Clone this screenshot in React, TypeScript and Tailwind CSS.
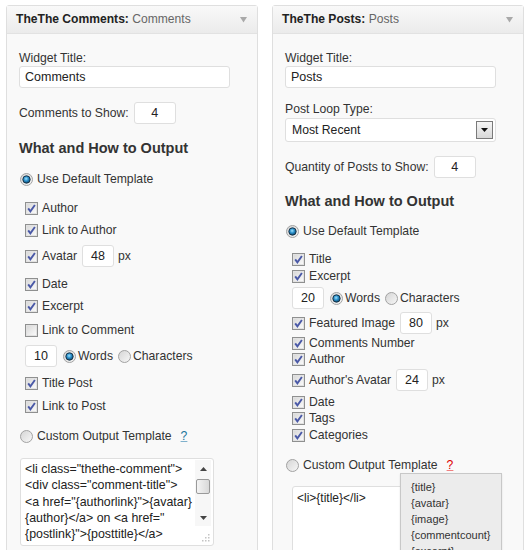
import React from "react";

const labelText = "text-[12.2px] leading-4 text-[#333]";

function Defs() {
  return (
    <svg width="0" height="0" className="absolute">
      <defs>
        <linearGradient id="cbg" x1="0" y1="0" x2="1" y2="1">
          <stop offset="0" stopColor="#d8d8d8" />
          <stop offset="1" stopColor="#fbfbfb" />
        </linearGradient>
        <linearGradient id="rbg" x1="0" y1="0" x2="1" y2="1">
          <stop offset="0" stopColor="#d4d4d4" />
          <stop offset="1" stopColor="#f8f8f8" />
        </linearGradient>
        <radialGradient id="rdot" cx="0.45" cy="0.4" r="0.6">
          <stop offset="0" stopColor="#9fe3ff" />
          <stop offset="0.5" stopColor="#2a8fca" />
          <stop offset="1" stopColor="#0b466b" />
        </radialGradient>
      </defs>
    </svg>
  );
}

function Check({ on = true }: { on?: boolean }) {
  return (
    <svg width="13" height="13" viewBox="0 0 13 13" className="shrink-0">
      <rect x="0.5" y="0.5" width="12" height="12" fill="#fff" stroke="#8f9090" />
      <rect x="1.5" y="1.5" width="10" height="10" fill="url(#cbg)" stroke="#e2e2e2" />
      {on && (
        <path d="M3.2 6.4 L5.4 9.4 L9.9 3" fill="none" stroke="#4a59a7" strokeWidth="1.9" />
      )}
    </svg>
  );
}

function Radio({ on = false }: { on?: boolean }) {
  return (
    <svg width="13" height="13" viewBox="0 0 13 13" className="shrink-0">
      <circle cx="6.5" cy="6.5" r="6" fill="url(#rbg)" stroke="#a2a2a2" />
      {on && <circle cx="6.5" cy="6.5" r="3.7" fill="url(#rdot)" stroke="#162f42" strokeWidth="0.9" />}
    </svg>
  );
}

function Num({ value, w }: { value: string; w: string }) {
  return (
    <div
      className={`flex h-[22px] ${w} shrink-0 items-center justify-center rounded-[3px] border border-[#dfdfdf] bg-white text-[12.5px] text-[#222]`}
    >
      {value}
    </div>
  );
}

function CheckRow({ label, on = true, mt }: { label: string; on?: boolean; mt: string }) {
  return (
    <div className={`${mt} flex h-4 items-center gap-[4px] ${labelText}`}>
      <Check on={on} />
      <span>{label}</span>
    </div>
  );
}

function PxRow({ label, value, mt }: { label: string; value: string; mt: string }) {
  return (
    <div className={`${mt} flex h-[22px] items-center ${labelText}`}>
      <Check />
      <span className="ml-[4px]">{label}</span>
      <div className="ml-[5px]">
        <Num value={value} w="w-[32px]" />
      </div>
      <span className="ml-[4px]">px</span>
    </div>
  );
}

function LengthRow({ value, mt }: { value: string; mt: string }) {
  return (
    <div className={`${mt} flex h-[22px] items-center ${labelText}`}>
      <Num value={value} w="w-[32px]" />
      <div className="ml-[6px]">
        <Radio on />
      </div>
      <span className="ml-[2px]">Words</span>
      <div className="ml-[5px]">
        <Radio />
      </div>
      <span className="ml-[2px]">Characters</span>
    </div>
  );
}

function RadioRow({ label, on = false, mt, children }: { label: string; on?: boolean; mt: string; children?: React.ReactNode }) {
  return (
    <div className={`${mt} ml-[1px] flex h-4 items-center gap-[4px] ${labelText}`}>
      <Radio on={on} />
      <span>{label}</span>
      {children}
    </div>
  );
}

function Heading({ mt }: { mt: string }) {
  return (
    <h3 className={`${mt} text-[14.5px] leading-[18px] font-bold text-[#333]`}>What and How to Output</h3>
  );
}

function Header({ bold, name }: { bold: string; name: string }) {
  return (
    <div className="flex h-[28px] items-center justify-between border-b border-[#e2e2e2] bg-linear-to-b from-[#f9f9f9] to-[#ebebeb] pr-[10px] pl-[9px] text-[12.1px]">
      <div>
        <span className="font-bold text-[#222]">{bold}</span>
        <span className="text-[#666]"> {name}</span>
      </div>
      <svg width="7" height="6" viewBox="0 0 7 6">
        <path d="M0 0 H7 L3.5 5.5 Z" fill="#a9a9a9" />
      </svg>
    </div>
  );
}

function TextField({ value }: { value: string }) {
  return (
    <div className="flex h-[22px] w-[211px] items-center rounded-[3px] border border-[#dfdfdf] bg-white pl-[5px] text-[12.5px] text-[#222]">
      {value}
    </div>
  );
}

const commentLines = [
  '<li class="thethe-comment">',
  '<div class="comment-title">',
  '<a href="{authorlink}">{avatar}',
  '{author}</a> on <a href="',
  '{postlink}">{posttitle}</a>',
];

function CommentsWidget() {
  return (
    <div className="h-[560px] w-[252px] shrink-0 rounded-t-[3px] border border-[#dfdfdf] bg-[#f9f9f9]">
      <Header bold="TheThe Comments:" name="Comments" />
      <div className="px-[12px]">
        <div className={`mt-[16px] ${labelText}`}>Widget Title:</div>
        <TextField value="Comments" />
        <div className={`mt-[14px] flex h-[22px] items-center gap-[5px] ${labelText}`}>
          <span>Comments to Show:</span>
          <Num value="4" w="w-[42px]" />
        </div>
        <Heading mt="mt-[15px]" />
        <RadioRow on label="Use Default Template" mt="mt-[14px]" />
        <div className="pl-[6px]">
          <CheckRow label="Author" mt="mt-[13px]" />
          <CheckRow label="Link to Author" mt="mt-[6px]" />
          <PxRow label="Avatar" value="48" mt="mt-[7px]" />
          <CheckRow label="Date" mt="mt-[9px]" />
          <CheckRow label="Excerpt" mt="mt-[6px]" />
          <CheckRow label="Link to Comment" on={false} mt="mt-[8px]" />
          <LengthRow value="10" mt="mt-[7px]" />
          <CheckRow label="Title Post" mt="mt-[8px]" />
          <CheckRow label="Link to Post" mt="mt-[7px]" />
        </div>
        <RadioRow label="Custom Output Template" mt="mt-[14px]">
          <span className="ml-[5px] text-[#21759b] underline decoration-[#7fb1cc]">?</span>
        </RadioRow>
        <div className="relative mt-[14px] ml-[1px] flex h-[88px] w-[194px] rounded-[3px] border border-[#dfdfdf] bg-white">
          <div className="flex-1 pt-[2px] pl-[4px] text-[12.4px] leading-[16.3px] whitespace-pre text-[#222]">
            {commentLines.map((l) => (
              <div key={l}>{l}</div>
            ))}
          </div>
          <div className="mt-[1px] mr-[2px] flex h-[66px] w-[16px] flex-col items-center bg-[#f7f7f7]">
            <div className="flex h-[17px] w-full items-center justify-center">
              <svg width="7" height="4" viewBox="0 0 7 4">
                <path d="M0 4 L3.5 0 L7 4 Z" fill="#444" />
              </svg>
            </div>
            <div className="mt-[2px] h-[15px] w-[14px] rounded-[2px] border border-[#9a9a9a] bg-linear-to-r from-[#f4f4f4] to-[#d9d9d9]" />
            <div className="mt-auto flex h-[17px] w-full items-center justify-center">
              <svg width="7" height="4" viewBox="0 0 7 4">
                <path d="M0 0 L3.5 4 L7 0 Z" fill="#444" />
              </svg>
            </div>
          </div>
          <svg width="9" height="9" viewBox="0 0 9 9" className="absolute right-[3px] bottom-[3px]">
            <g fill="#c4c4c4">
              <rect x="7" y="1" width="1.5" height="1.5" />
              <rect x="4" y="4" width="1.5" height="1.5" />
              <rect x="7" y="4" width="1.5" height="1.5" />
              <rect x="1" y="7" width="1.5" height="1.5" />
              <rect x="4" y="7" width="1.5" height="1.5" />
              <rect x="7" y="7" width="1.5" height="1.5" />
            </g>
          </svg>
        </div>
      </div>
    </div>
  );
}

const tokens = ["{title}", "{avatar}", "{image}", "{commentcount}", "{excerpt}"];

function PostsWidget() {
  return (
    <div className="relative h-[560px] w-[252px] shrink-0 rounded-t-[3px] border border-[#dfdfdf] bg-[#f9f9f9]">
      <Header bold="TheThe Posts:" name="Posts" />
      <div className="px-[12px]">
        <div className={`mt-[16px] ${labelText}`}>Widget Title:</div>
        <TextField value="Posts" />
        <div className={`mt-[13px] ${labelText}`}>Post Loop Type:</div>
        <div className="mt-px flex h-[24px] w-[211px] items-center justify-between rounded-[3px] border border-[#dfdfdf] bg-white pr-[2px] pl-[6px] text-[12.2px] text-[#222]">
          <span>Most Recent</span>
          <div className="flex h-[18px] w-[17px] items-center justify-center border border-[#7a7a7a] bg-linear-to-b from-[#f6f6f6] to-[#d8d8d8]">
            <svg width="7" height="4" viewBox="0 0 7 4">
              <path d="M0 0 L3.5 4 L7 0 Z" fill="#111" />
            </svg>
          </div>
        </div>
        <div className={`mt-[14px] flex h-[22px] items-center gap-[5px] ${labelText}`}>
          <span>Quantity of Posts to Show:</span>
          <Num value="4" w="w-[42px]" />
        </div>
        <Heading mt="mt-[14px]" />
        <RadioRow on label="Use Default Template" mt="mt-[13px]" />
        <div className="pl-[7px]">
          <CheckRow label="Title" mt="mt-[12px]" />
          <CheckRow label="Excerpt" mt="mt-[1px]" />
          <LengthRow value="20" mt="mt-[3px]" />
          <PxRow label="Featured Image" value="80" mt="mt-[3px]" />
          <CheckRow label="Comments Number" mt="mt-[1px]" />
          <CheckRow label="Author" mt="mt-0" />
          <PxRow label="Author's Avatar" value="24" mt="mt-[2px]" />
          <CheckRow label="Date" mt="mt-[3px]" />
          <CheckRow label="Tags" mt="mt-0" />
          <CheckRow label="Categories" mt="mt-[1px]" />
        </div>
        <RadioRow label="Custom Output Template" mt="mt-[14px]">
          <span className="ml-[5px] text-[#dd0000] underline decoration-[#f08080]">?</span>
        </RadioRow>
        <div className="mt-[13px] ml-[7px] h-[80px] w-[205px] rounded-[3px] border border-[#dfdfdf] bg-white pt-[3px] pl-[4px] text-[12px] leading-4 text-[#222]">
          {"<li>{title}</li>"}
        </div>
      </div>
      <div className="absolute top-[467px] left-[127px] h-[100px] w-[102px] border border-[#c8c8c8] bg-[#ececec] pt-[5px] pl-[10px] text-[11px] leading-4 text-[#333] shadow-[0_1px_2px_rgba(0,0,0,0.1)]">
        {tokens.map((t) => (
          <div key={t}>{t}</div>
        ))}
      </div>
    </div>
  );
}

export default function App() {
  return (
    <div className="flex h-[550px] w-[530px] gap-[14px] overflow-hidden bg-white pt-[5px] pl-[6px] font-['Liberation_Sans',Arial,sans-serif]">
      <Defs />
      <CommentsWidget />
      <PostsWidget />
    </div>
  );
}
